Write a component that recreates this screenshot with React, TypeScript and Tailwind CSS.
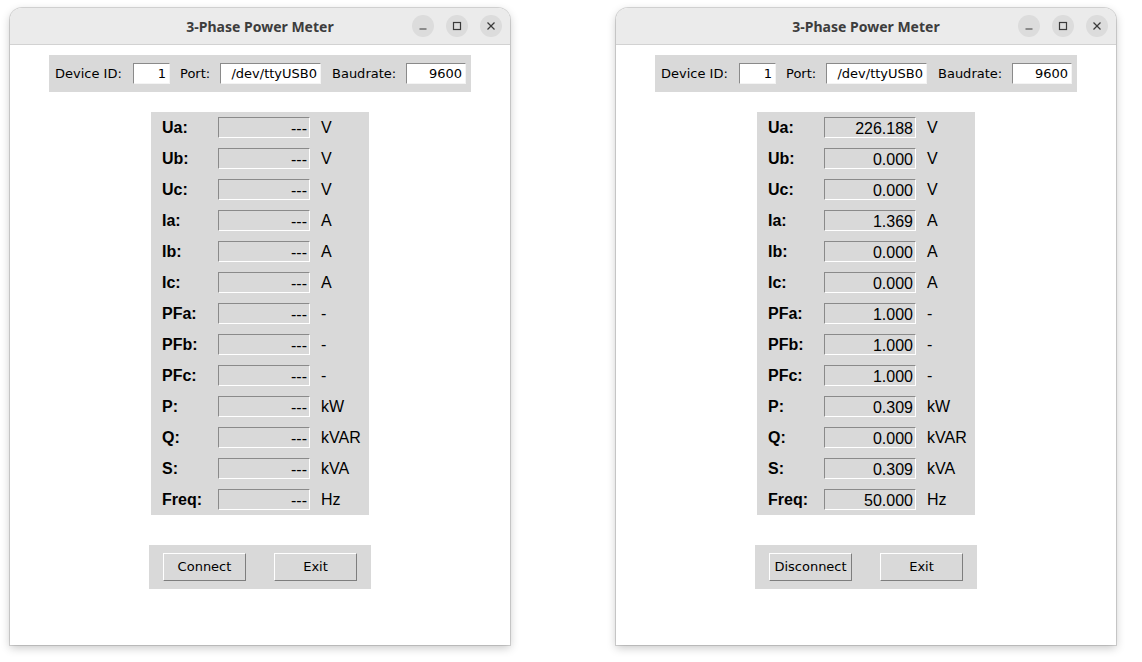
import React from "react";

const ROWS: [string, string][] = [
  ["Ua", "V"],
  ["Ub", "V"],
  ["Uc", "V"],
  ["Ia", "A"],
  ["Ib", "A"],
  ["Ic", "A"],
  ["PFa", "-"],
  ["PFb", "-"],
  ["PFc", "-"],
  ["P", "kW"],
  ["Q", "kVAR"],
  ["S", "kVA"],
  ["Freq", "Hz"],
];

const VALUES = [
  "226.188",
  "0.000",
  "0.000",
  "1.369",
  "0.000",
  "0.000",
  "1.000",
  "1.000",
  "1.000",
  "0.309",
  "0.000",
  "0.309",
  "50.000",
];

function TitleButton({ kind }: { kind: "min" | "max" | "close" }) {
  return (
    <div className="w-[22px] h-[22px] rounded-full bg-[#dcdcdc] flex items-center justify-center">
      <svg width="12" height="12" viewBox="0 0 12 12" fill="none" stroke="#3a3a3a" strokeWidth="1.2">
        {kind === "min" && <line x1="2.5" y1="9" x2="9.5" y2="9" />}
        {kind === "max" && <rect x="2.5" y="2.5" width="7" height="7" />}
        {kind === "close" && (
          <>
            <line x1="2.5" y1="2.5" x2="9.5" y2="9.5" />
            <line x1="9.5" y1="2.5" x2="2.5" y2="9.5" />
          </>
        )}
      </svg>
    </div>
  );
}

function TopEntry({ w, value }: { w: string; value: string }) {
  return (
    <div
      className={`${w} shrink-0 h-[21px] bg-white border border-t-[#8a8a8a] border-l-[#8a8a8a] border-b-[#f4f4f4] border-r-[#f4f4f4] flex items-center justify-end pr-[3px] overflow-hidden whitespace-nowrap text-[13px] text-black`}
    >
      {value}
    </div>
  );
}

function Window({ values, button }: { values: string[] | null; button: string }) {
  return (
    <div className="w-[500px] h-[637px] bg-white rounded-t-[12px] shadow-[0_0_0_1px_rgba(0,0,0,0.14),0_3px_10px_rgba(0,0,0,0.22)] flex flex-col overflow-hidden">
      <div className="h-[37px] shrink-0 bg-[#ebebeb] border-b border-[#d2d2d2] flex items-center relative">
        <div
          className="absolute inset-0 flex items-center justify-center text-[14px] font-bold text-[#3d3d3d]"
          style={{ fontFamily: '"Noto Sans", "DejaVu Sans", sans-serif' }}
        >
          3-Phase Power Meter
        </div>
        <div className="ml-auto mr-[8px] flex gap-[12px] relative">
          <TitleButton kind="min" />
          <TitleButton kind="max" />
          <TitleButton kind="close" />
        </div>
      </div>
      <div
        className="flex flex-col items-center"
        style={{ fontFamily: '"DejaVu Sans", sans-serif' }}
      >
        <div className="mt-[10px] w-[422px] h-[37px] bg-[#d9d9d9] flex items-center pl-[6px] text-[13px] text-black">
          <span className="w-[68px] shrink-0 whitespace-nowrap">Device ID:</span>
          <div className="ml-[10px]">
            <TopEntry w="w-[37px]" value="1" />
          </div>
          <span className="ml-[10px] w-[30px] shrink-0 whitespace-nowrap">Port:</span>
          <div className="ml-[10px]">
            <TopEntry w="w-[101px]" value="/dev/ttyUSB0" />
          </div>
          <span className="ml-[11px] w-[64px] shrink-0 whitespace-nowrap">Baudrate:</span>
          <div className="ml-[10px]">
            <TopEntry w="w-[60px]" value="9600" />
          </div>
        </div>

        <div
          className="mt-[20px] w-[218px] bg-[#d9d9d9] flex flex-col pl-[11px] text-[16px] text-black"
          style={{ fontFamily: '"Liberation Sans", Arial, sans-serif' }}
        >
          {ROWS.map(([label, unit], i) => (
            <div key={label} className="h-[31px] flex items-center">
              <span className="w-[56px] font-bold">{label}:</span>
              <div className="w-[92px] h-[21px] bg-[#d9d9d9] border border-t-[#8a8a8a] border-l-[#8a8a8a] border-b-white border-r-white flex items-center justify-end pr-[2px] pt-[1px] leading-[19px]">
                {values ? values[i] : "---"}
              </div>
              <span className="ml-[11px]">{unit}</span>
            </div>
          ))}
        </div>

        <div className="mt-[30px] w-[222px] h-[44px] bg-[#d9d9d9] flex items-center pl-[14px] gap-[28px] text-[13px] text-black">
          <div className="w-[83px] h-[28px] border border-t-white border-l-white border-b-[#7e7e7e] border-r-[#7e7e7e] flex items-center justify-center">
            {button}
          </div>
          <div className="w-[83px] h-[28px] border border-t-white border-l-white border-b-[#7e7e7e] border-r-[#7e7e7e] flex items-center justify-center">
            Exit
          </div>
        </div>
      </div>
    </div>
  );
}

export default function App() {
  return (
    <div className="w-[1142px] h-[662px] bg-white flex items-start pl-[10px] pt-[8px] gap-[106px]">
      <Window values={null} button="Connect" />
      <Window values={VALUES} button="Disconnect" />
    </div>
  );
}
